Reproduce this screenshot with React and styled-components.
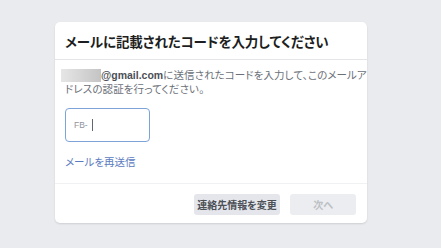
import React from 'react';
import styled, { createGlobalStyle } from 'styled-components';

const Global = createGlobalStyle`
  html, body {
    margin: 0;
    padding: 0;
    background: #e9ebee;
  }
  body {
    font-family: "Noto Sans CJK JP", "Liberation Sans", sans-serif;
    font-feature-settings: "palt";
  }
`;

const Page = styled.div`
  width: 441px;
  height: 248px;
  box-sizing: border-box;
  padding: 22px 0 0 55px;
`;

const Card = styled.div`
  width: 312px;
  background: #fff;
  border-radius: 5px;
  box-shadow: 0 1px 2px rgba(0, 0, 0, 0.12);
  overflow: hidden;
`;

const Header = styled.div`
  height: 37px;
  display: flex;
  align-items: center;
  padding: 0 10px;
  border-bottom: 1px solid #e3e5e8;
`;

const Title = styled.h2`
  margin: 0;
  font-size: 13.5px;
  font-weight: 700;
  color: #1c1e21;
  letter-spacing: -0.1px;
`;

const Body = styled.div`
  padding: 8px 10px 14px;
  border-bottom: 1px solid #f0f1f3;
`;

const Text = styled.p`
  margin: 0;
  font-size: 10.5px;
  line-height: 14px;
  color: #6b7078;
  letter-spacing: 0.1px;
  white-space: nowrap;
`;

const Blur = styled.span`
  display: inline-block;
  width: 40px;
  height: 13px;
  vertical-align: -3px;
  margin-left: -4px;
  background: linear-gradient(90deg, #e6e6e6 0%, #d2d2d2 60%, #c4c4c4 100%);
`;

const Mail = styled.b`
  font-family: "Liberation Sans", sans-serif;
  font-weight: 700;
  font-size: 10.5px;
  letter-spacing: 0;
  color: #4b4f56;
`;

const CodeBox = styled.div`
  width: 85px;
  height: 34px;
  box-sizing: border-box;
  margin-top: 12px;
  border: 1.5px solid #7ea3d8;
  border-radius: 4px;
  display: flex;
  align-items: center;
  padding-left: 8px;
  gap: 4px;
`;

const Prefix = styled.span`
  font-family: "Liberation Sans", sans-serif;
  font-size: 8.5px;
  color: #90949c;
`;

const Caret = styled.span`
  width: 1px;
  height: 12px;
  background: #606770;
`;

const Resend = styled.a`
  display: block;
  margin-top: 13px;
  font-size: 10.5px;
  line-height: 14px;
  color: #5b7bc0;
  text-decoration: none;
`;

const Footer = styled.div`
  display: flex;
  justify-content: flex-end;
  gap: 10px;
  padding: 10px 11px 8px;
`;

const Button = styled.button`
  height: 21px;
  width: ${(p) => p.$w}px;
  padding: 0;
  border: 0;
  border-radius: 3px;
  font-family: inherit;
  font-feature-settings: "palt";
  font-size: 10px;
  font-weight: 700;
  background: ${(p) => (p.disabled ? '#ebedf0' : '#e4e6eb')};
  color: ${(p) => (p.disabled ? '#bcc0c4' : '#4b4f56')};
`;

export default function App() {
  return (
    <Page>
      <Global />
      <Card>
        <Header>
          <Title>メールに記載されたコードを入力してください</Title>
        </Header>
        <Body>
          <Text>
            <Blur />
            <Mail>@gmail.com</Mail>に送信されたコードを入力して、このメールア<br />
            ドレスの認証を行ってください。
          </Text>
          <CodeBox>
            <Prefix>FB-</Prefix>
            <Caret />
          </CodeBox>
          <Resend href="#">メールを再送信</Resend>
        </Body>
        <Footer>
          <Button $w={86}>連絡先情報を変更</Button>
          <Button $w={66} disabled>次へ</Button>
        </Footer>
      </Card>
    </Page>
  );
}
